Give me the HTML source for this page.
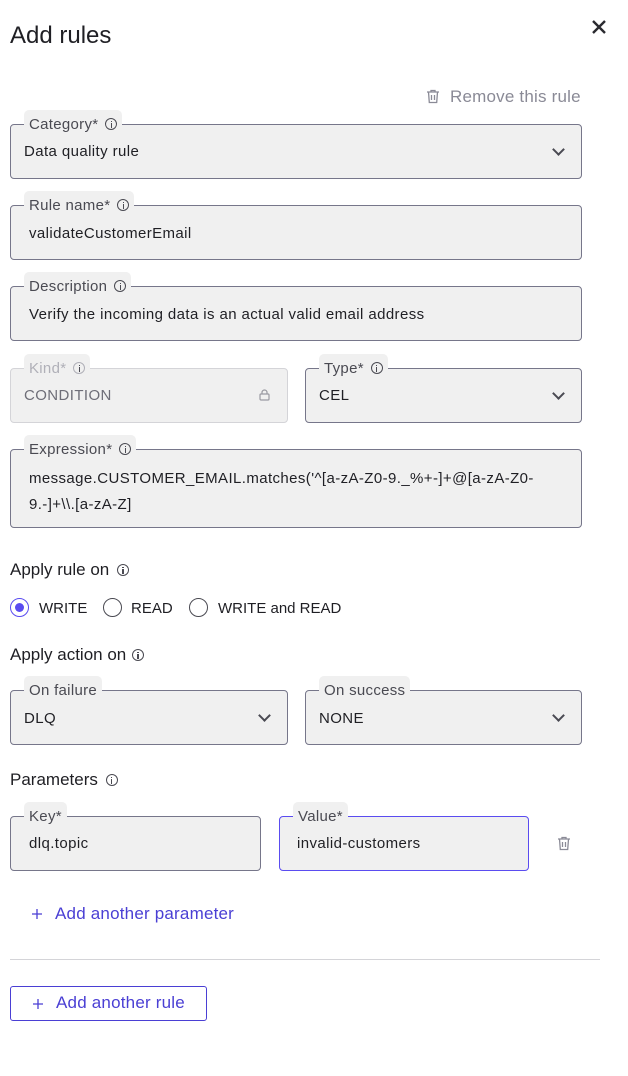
<!DOCTYPE html>
<html><head><meta charset="utf-8"><style>
*{box-sizing:border-box;margin:0;padding:0}
body{width:628px;height:1076px;background:#fff;font-family:"Liberation Sans",sans-serif;color:#1f1f24;position:relative;overflow:hidden}
.a{position:absolute}
.box{position:absolute;background:#f0f0f0;border:1px solid #76768a;border-radius:4px}
.box.dis{border-color:#d4d4d8}
.box.focus{border-color:#5a4cf0}
.lab{position:absolute;top:-15px;left:13px;background:#f0f0f0;border-radius:5px 5px 0 0;padding:7px 5px 0 5px;height:22px;font-size:15px;color:#4a4a52;white-space:nowrap;line-height:16px;letter-spacing:0.3px}
.val{position:absolute;left:13px;font-size:15px;color:#1f1f24;white-space:nowrap;letter-spacing:0.4px}
.info{display:inline-block;width:12px;height:12px;border:1.3px solid #4a4a52;border-radius:50%;position:relative;vertical-align:-1px;margin-left:7px}
.info:after{content:"";position:absolute;left:4.2px;top:4px;width:1.4px;height:4.5px;background:#4a4a52}
.info:before{content:"";position:absolute;left:4.2px;top:1.5px;width:1.4px;height:1.4px;background:#4a4a52}
.chev{position:absolute;right:18px;top:50%;margin-top:-7px;width:9px;height:9px;border-right:2px solid #4a4a52;border-bottom:2px solid #4a4a52;transform:rotate(45deg)}
.h{position:absolute;left:10px;font-size:17px;color:#1f1f24}
.radio{position:absolute;width:19px;height:19px;border:1.3px solid #4a4a52;border-radius:50%}
.rl{position:absolute;font-size:15px;color:#1f1f24}
</style></head><body>
<div class="a" style="left:10px;top:22px;font-size:24px;color:#1f1f24">Add rules</div>
<svg class="a" style="left:591px;top:19px" width="16" height="16" viewBox="0 0 16 16"><path d="M2 2L14 14M14 2L2 14" stroke="#2a2a30" stroke-width="2.4"/></svg>

<svg class="a" style="left:426px;top:89px" width="14" height="15" viewBox="0 0 14 15"><path d="M1 3h12M5 3V1.5h4V3M2.5 3l.8 10.5h7.4l.8-10.5M5.5 6v5M8.5 6v5" stroke="#8a8a96" stroke-width="1.3" fill="none"/></svg>
<div class="a" style="left:450px;top:87px;font-size:17px;color:#8a8a96;letter-spacing:0.2px">Remove this rule</div>

<div class="box" style="left:10px;top:124px;width:572px;height:55px"><div class="lab">Category*<span class="info"></span></div><div class="val" style="top:18px">Data quality rule</div><div class="chev"></div></div>
<div class="box" style="left:10px;top:205px;width:572px;height:55px"><div class="lab">Rule name*<span class="info"></span></div><div class="val" style="left:18px;top:19px">validateCustomerEmail</div></div>
<div class="box" style="left:10px;top:286px;width:572px;height:55px"><div class="lab">Description<span class="info"></span></div><div class="val" style="left:18px;top:19px">Verify the incoming data is an actual valid email address</div></div>

<div class="box dis" style="left:10px;top:368px;width:278px;height:55px"><div class="lab" style="color:#b0b0b8">Kind*<span class="info" style="border-color:#b0b0b8"></span></div><div class="val" style="top:18px;color:#6e6e78">CONDITION</div>
<svg class="a" style="left:248px;top:20px" width="11" height="12" viewBox="0 0 11 12"><rect x="1" y="5" width="9" height="6" rx="1" stroke="#9a9aa2" stroke-width="1.2" fill="none"/><path d="M3 5V3.5a2.5 2.5 0 0 1 5 0V5" stroke="#9a9aa2" stroke-width="1.2" fill="none"/></svg></div>
<div class="box" style="left:305px;top:368px;width:277px;height:55px"><div class="lab">Type*<span class="info"></span></div><div class="val" style="top:18px">CEL</div><div class="chev"></div></div>

<div class="box" style="left:10px;top:449px;width:572px;height:79px"><div class="lab">Expression*<span class="info"></span></div><div class="val" style="left:18px;top:16px;line-height:26px;white-space:nowrap;width:545px">message.CUSTOMER_EMAIL.matches('^[a-zA-Z0-9._%+-]+@[a-zA-Z0-<br>9.-]+\\.[a-zA-Z]</div></div>

<div class="h" style="top:560px">Apply rule on<span class="info" style="margin-left:8px"></span></div>
<div class="radio" style="left:10px;top:598px;border-color:#5a4cf0"><div class="a" style="left:3.5px;top:3.5px;width:9.5px;height:9.5px;border-radius:50%;background:#5a4cf0"></div></div>
<div class="rl" style="left:39px;top:600px">WRITE</div>
<div class="radio" style="left:103px;top:598px"></div>
<div class="rl" style="left:131px;top:600px">READ</div>
<div class="radio" style="left:189px;top:598px"></div>
<div class="rl" style="left:218px;top:600px">WRITE and READ</div>

<div class="h" style="top:645px">Apply action on<span class="info" style="margin-left:6px"></span></div>
<div class="box" style="left:10px;top:690px;width:278px;height:55px"><div class="lab">On failure</div><div class="val" style="top:19px">DLQ</div><div class="chev"></div></div>
<div class="box" style="left:305px;top:690px;width:277px;height:55px"><div class="lab">On success</div><div class="val" style="top:19px">NONE</div><div class="chev"></div></div>

<div class="h" style="top:770px">Parameters<span class="info" style="margin-left:8px"></span></div>
<div class="box" style="left:10px;top:816px;width:251px;height:55px"><div class="lab">Key*</div><div class="val" style="left:18px;top:18px">dlq.topic</div></div>
<div class="box focus" style="left:279px;top:816px;width:250px;height:55px"><div class="lab">Value*</div><div class="val" style="left:17px;top:18px">invalid-customers</div></div>
<svg class="a" style="left:557px;top:836px" width="14" height="15" viewBox="0 0 14 15"><path d="M1 3h12M5 3V1.5h4V3M2.5 3l.8 10.5h7.4l.8-10.5M5.5 6v5M8.5 6v5" stroke="#8a8a96" stroke-width="1.3" fill="none"/></svg>

<svg class="a" style="left:31px;top:908px" width="12" height="12" viewBox="0 0 12 12"><path d="M6 1v10M1 6h10" stroke="#4a3fd4" stroke-width="1.3"/></svg>
<div class="a" style="left:55px;top:904px;font-size:17px;color:#4a3fd4;letter-spacing:0.2px">Add another parameter</div>
<div class="a" style="left:10px;top:959px;width:590px;height:1px;background:#d4d4d8"></div>
<div class="a" style="left:10px;top:986px;width:197px;height:35px;border:1px solid #4a3fd4;border-radius:3px"></div>
<svg class="a" style="left:32px;top:998px" width="12" height="12" viewBox="0 0 12 12"><path d="M6 1v10M1 6h10" stroke="#4a3fd4" stroke-width="1.3"/></svg>
<div class="a" style="left:56px;top:993px;font-size:17px;color:#4a3fd4;letter-spacing:0.2px">Add another rule</div>
</body></html>
